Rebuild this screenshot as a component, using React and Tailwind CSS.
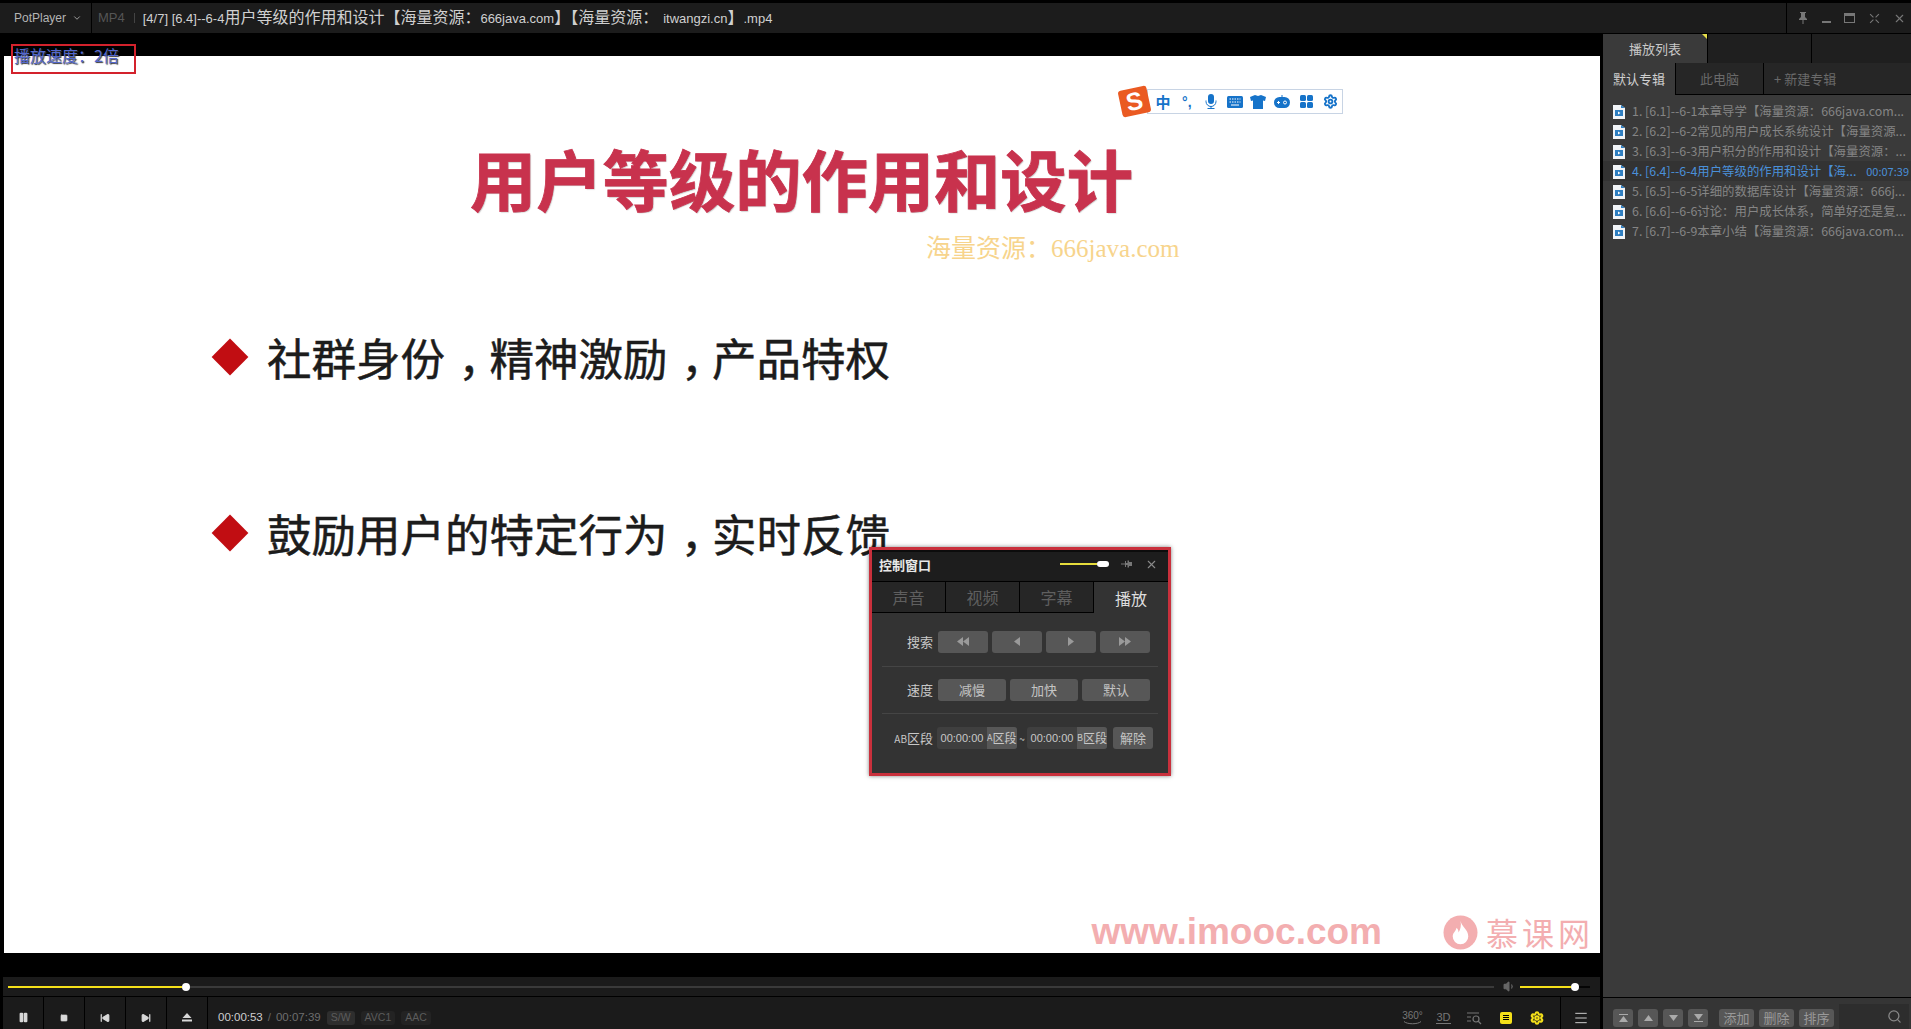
import React from 'react';
import { Search, X, ChevronDown, Pause, Square, SkipBack, SkipForward, Settings, Menu, Volume1 } from 'lucide-react';

const cjk = { fontFamily: '"Noto Sans CJK SC", sans-serif' };

const playlist = [
  { text: '1. [6.1]--6-1本章导学【海量资源：666java.com...' },
  { text: '2. [6.2]--6-2常见的用户成长系统设计【海量资源...' },
  { text: '3. [6.3]--6-3用户积分的作用和设计【海量资源：...' },
  { text: '4. [6.4]--6-4用户等级的作用和设计【海...', time: '00:07:39', active: true },
  { text: '5. [6.5]--6-5详细的数据库设计【海量资源：666j...' },
  { text: '6. [6.6]--6-6讨论：用户成长体系，简单好还是复...' },
  { text: '7. [6.7]--6-9本章小结【海量资源：666java.com...' },
];

const FileIcon = () => (
  <svg width="12" height="15" viewBox="0 0 12 15" className="shrink-0">
    <path d="M0 1h8l4 3v11H0z" fill="#f2f5f8" />
    <path d="M8 1l4 3H8z" fill="#2f7fc1" />
    <rect x="2" y="6" width="8" height="6" fill="#2f7fc1" />
    <path d="M5 7.5l2.5 1.5L5 10.5z" fill="#fff" />
  </svg>
);

const Tri = ({ dir = 'right', double }) => {
  const d = dir === 'right' ? 'M0 0l6 4.5L0 9z' : 'M6 0L0 4.5 6 9z';
  return (
    <svg width={double ? 12 : 6} height="9" viewBox={double ? '0 0 12 9' : '0 0 6 9'} fill="#9a9a9a">
      <path d={d} />
      {double && <path d={d} transform="translate(6 0)" />}
    </svg>
  );
};

const PanelBtn = ({ children, className = '' }) => (
  <div className={`h-[22px] rounded-[3px] bg-[#575757] flex items-center justify-center text-[13px] text-[#c4c4c4] ${className}`}>
    {children}
  </div>
);

const ControlWindow = () => (
  <div className="absolute left-[869px] top-[547px] w-[302px] h-[229px] border-[3px] border-[#c9303c] bg-[#333333] shadow-[0_0_4px_rgba(0,0,0,0.5)] flex flex-col" style={cjk}>
    <div className="h-[31px] pb-[5px] bg-[#1d1d1d] border-t-2 border-[#0c0c0c] flex items-center pl-[7px] pr-[10px]">
      <span className="text-[13px] font-bold text-[#e8e8e8] leading-none">控制窗口</span>
      <div className="ml-auto flex items-center">
        <div className="w-[37px] h-[2px] bg-[#e6dc3c]" />
        <div className="w-[12px] h-[6px] rounded-full bg-white" />
      </div>
      <svg width="12" height="10" viewBox="0 0 12 10" fill="#777" className="ml-[12px]">
        <path d="M0 4.5h4v1H0zM4 2h1v2h1.5V1.5H8V3h3v4H8v1.5H6.500V6H5v2H4z" />
      </svg>
      <X size={13} className="ml-[12px] text-[#8a8a8a]" />
    </div>
    <div className="h-[32px] flex text-[16px] text-[#5f5f5f] border-t border-black">
      <div className="w-[74px] flex items-center justify-center bg-[#262626] border-b border-r border-black">声音</div>
      <div className="w-[74px] flex items-center justify-center bg-[#262626] border-b border-r border-black">视频</div>
      <div className="w-[74px] flex items-center justify-center bg-[#262626] border-b border-r border-black">字幕</div>
      <div className="flex-1 flex items-center justify-center text-[#dddddd]">播放</div>
    </div>
    <div className="flex-1 px-[10px] text-[13px] text-[#c8c8c8]">
      <div className="h-[54px] pt-[4px] flex items-center border-b border-[#454545]">
        <span className="w-[51px] text-right whitespace-nowrap">搜索</span>
        <div className="ml-[5px] flex gap-[4px]">
          <PanelBtn className="w-[50px]"><Tri dir="left" double /></PanelBtn>
          <PanelBtn className="w-[50px]"><Tri dir="left" /></PanelBtn>
          <PanelBtn className="w-[50px]"><Tri /></PanelBtn>
          <PanelBtn className="w-[50px]"><Tri double /></PanelBtn>
        </div>
      </div>
      <div className="h-[47px] flex items-center border-b border-[#454545]">
        <span className="w-[51px] text-right">速度</span>
        <div className="ml-[5px] flex gap-[4px]">
          <PanelBtn className="w-[68px]">减慢</PanelBtn>
          <PanelBtn className="w-[68px]">加快</PanelBtn>
          <PanelBtn className="w-[68px]">默认</PanelBtn>
        </div>
      </div>
      <div className="h-[48px] flex items-center whitespace-nowrap">
        <span className="w-[51px] text-right text-[13px]"><span className="text-[10px]">AB</span>区段</span>
        <div className="ml-[4px] w-[80px] h-[22px] rounded-[3px] bg-[#3f3f3f] flex items-center overflow-hidden">
          <span className="w-[50px] text-center text-[11px]" style={{ fontFamily: '"Liberation Sans", sans-serif' }}>00:00:00</span>
          <span className="flex-1 h-full bg-[#575757] flex items-center text-[12px]"><span className="text-[9px]">A</span>区段</span>
        </div>
        <span className="w-[10px] text-[10px] text-center">~</span>
        <div className="w-[80px] h-[22px] rounded-[3px] bg-[#3f3f3f] flex items-center overflow-hidden">
          <span className="w-[50px] text-center text-[11px]" style={{ fontFamily: '"Liberation Sans", sans-serif' }}>00:00:00</span>
          <span className="flex-1 h-full bg-[#575757] flex items-center text-[12px]"><span className="text-[9px]">B</span>区段</span>
        </div>
        <PanelBtn className="ml-[6px] w-[40px]">解除</PanelBtn>
      </div>
    </div>
  </div>
);

const ImeCell = ({ children }) => (
  <div className="w-[24px] h-full flex items-center justify-center">{children}</div>
);

const SogouBar = () => (
  <div className="absolute left-[1120px] top-[88px] flex items-center">
    <div className="w-[29px] h-[27px] rounded-[3px] bg-[#ea5a22] -rotate-12 flex items-center justify-center text-white font-black text-[25px] leading-none z-10" style={{ fontFamily: '"Liberation Sans", sans-serif' }}>S</div>
    <div className="-ml-[2px] h-[25px] w-[196px] bg-white border border-[#c8d4e4] flex items-center pl-[3px] text-[#1673c9]">
      <ImeCell><span className="text-[15px] font-bold leading-none" style={cjk}>中</span></ImeCell>
      <ImeCell><span className="text-[14px] font-bold leading-none" style={{ fontFamily: '"Liberation Sans", sans-serif' }}>°,</span></ImeCell>
      <ImeCell>
        <svg width="12" height="15" viewBox="0 0 12 15" fill="currentColor">
          <rect x="3" y="0" width="6" height="10" rx="3" />
          <path d="M1 6.5v1a5 5 0 0010 0v-1" fill="none" stroke="currentColor" />
          <path d="M5.5 12h1v2h3v1h-7v-1h3z" />
        </svg>
      </ImeCell>
      <ImeCell>
        <svg width="16" height="12" viewBox="0 0 16 12">
          <rect width="16" height="12" rx="1.5" fill="currentColor" />
          <path d="M2.500 3h11M2.500 6h11" stroke="#fff" strokeDasharray="1.5 1" />
          <path d="M4 9h8" stroke="#fff" />
        </svg>
      </ImeCell>
      <ImeCell>
        <svg width="16" height="14" viewBox="0 0 16 14" fill="currentColor"><path d="M5 0l3 1 3-1 5 2-1 4-2-.5V14H3V5.500L1 6 0 2z" /></svg>
      </ImeCell>
      <ImeCell>
        <svg width="16" height="13" viewBox="0 0 16 13">
          <rect y="2" width="16" height="11" rx="5.5" fill="currentColor" />
          <path d="M8 0v3" stroke="currentColor" />
          <path d="M3 7.500h3M4.500 6v3" stroke="#fff" />
          <circle cx="11" cy="7.5" r="1.5" fill="none" stroke="#fff" />
        </svg>
      </ImeCell>
      <ImeCell>
        <svg width="13" height="13" viewBox="0 0 13 13" fill="currentColor">
          <rect width="6" height="6" rx="1.5" /><rect x="7" width="6" height="6" rx="1.5" />
          <rect y="7" width="6" height="6" rx="1.5" /><rect x="7" y="7" width="6" height="6" rx="1.5" />
        </svg>
      </ImeCell>
      <ImeCell><Settings size={15} strokeWidth={3} /></ImeCell>
    </div>
  </div>
);

const MoocLogo = () => (
  <div className="absolute right-[6px] bottom-[1px] h-[40px] flex items-center text-[#f3aeb0] whitespace-nowrap">
    <span className="text-[37px] font-bold leading-[40px]" style={{ fontFamily: '"Liberation Sans", sans-serif' }}>www.imooc.com</span>
    <svg width="35" height="35" viewBox="0 0 36 36" className="ml-[61px]">
      <circle cx="18" cy="18" r="17.5" fill="#f3aeb0" />
      <path d="M18 6c1 6 8 9 8 16a8 8 0 01-16 0c0-4 3-5 4-9 2 2 2 4 2 5 2-3 3-7 2-12z" fill="#fff" />
    </svg>
    <span className="ml-[8px] text-[32px] tracking-[4px] leading-[40px]" style={cjk}>慕课网</span>
  </div>
);

// the slide sets its full-width comma in the middle of the cell
const Comma = () => <span className="pl-[0.3em] tracking-[-0.3em]">，</span>;

const Bullet = ({ className, parts }) => (
  <div className={`pl-[207px] flex items-center gap-[19px] ${className}`}>
    <div className="w-[37px] h-[37px] flex items-center justify-center"><div className="w-[26px] h-[26px] rotate-45 bg-[#c10d12]" /></div>
    <span className="text-[44.5px] leading-[62px] text-[#1c1c1c] whitespace-nowrap [-webkit-text-stroke:0.5px_#1c1c1c]">
      {parts[0]}<Comma />{parts[1]}{parts[2] && <Comma />}{parts[2]}
    </span>
  </div>
);

const Slide = () => (
  <div className="relative ml-[4px] mr-[3px] mt-[23px] h-[897px] bg-white" style={cjk}>
    <div className="pt-[71px] pl-[466px]">
      <h1 className="text-[66.3px] leading-[100px] font-bold text-[#c8324d] whitespace-nowrap [-webkit-text-stroke:0.8px_#c8324d] [text-shadow:1px_1px_1px_rgba(120,120,120,0.4)]">用户等级的作用和设计</h1>
    </div>
    <div className="pl-[922px] mt-[7px] text-[25px] leading-[30px] text-[#f7d48c] whitespace-nowrap" style={{ fontFamily: '"Liberation Serif", "Noto Sans CJK SC", serif' }}>海量资源：666java.com</div>
    <Bullet className="mt-[62px]" parts={['社群身份', '精神激励', '产品特权']} />
    <Bullet className="mt-[114px]" parts={['鼓励用户的特定行为', '实时反馈']} />
    <MoocLogo />
  </div>
);

const CtrlCell = ({ children }) => (
  <div className="w-[41px] h-full pt-[9px] border-r border-black flex items-center justify-center text-[#d8d8d8]">{children}</div>
);

const Badge = ({ children, dark }) => (
  <span className={`px-[4px] h-[14px] flex items-center rounded-[3px] text-[10.5px] text-[#5c5c5c] ${dark ? 'bg-[#2e2e2e]' : 'bg-[#232323]'}`}>{children}</span>
);

const ToolCell = ({ children }) => (
  <div className="w-[31px] h-full pt-[9px] flex items-center justify-center">{children}</div>
);

const Controls = () => (
  <div className="h-[52px] ml-[3px] mr-[3px] bg-[#1b1b1b] flex flex-col" style={{ fontFamily: '"Liberation Sans", sans-serif' }}>
    <div className="h-[20px] flex items-center pl-[5px] pr-[10px] border-b border-black">
      <div className="w-[174px] h-[2px] bg-[#f5e01a]" />
      <div className="w-[8px] h-[8px] rounded-full bg-white shrink-0" />
      <div className="flex-1 h-[2px] bg-[#3a3a3a]" />
      <Volume1 size={13} fill="#666" className="ml-[9px] text-[#666]" />
      <div className="ml-[4px] w-[51px] h-[2px] bg-[#f5e01a]" />
      <div className="w-[8px] h-[8px] rounded-full bg-white shrink-0" />
      <div className="w-[11px] h-[2px] bg-[#050505]" />
    </div>
    <div className="flex-1 flex items-center">
      <CtrlCell><Pause size={11} fill="currentColor" strokeWidth={3} /></CtrlCell>
      <CtrlCell><Square size={8} fill="currentColor" /></CtrlCell>
      <CtrlCell><SkipBack size={10} fill="currentColor" strokeWidth={3} /></CtrlCell>
      <CtrlCell><SkipForward size={10} fill="currentColor" strokeWidth={3} /></CtrlCell>
      <CtrlCell>
        <svg width="10" height="9" viewBox="0 0 10 9" fill="currentColor"><path d="M5 0l4.500 5H.5z" /><rect y="6.5" width="10" height="2" /></svg>
      </CtrlCell>
      <div className="ml-[10px] pt-[10px] flex items-center text-[11.5px] whitespace-nowrap">
        <span className="text-[#cfcfcf]">00:00:53</span>
        <span className="ml-[5px] text-[#666]">/</span>
        <span className="ml-[5px] text-[#6e6e6e]">00:07:39</span>
        <div className="ml-[6px] flex gap-[6px]">
          <Badge dark>S/W</Badge>
          <Badge>AVC1</Badge>
          <Badge>AAC</Badge>
        </div>
      </div>
      <div className="ml-auto flex items-center h-full text-[#777]">
        <ToolCell>
          <div className="flex flex-col items-center">
            <span className="text-[10px] leading-[10px]">360°</span>
            <svg width="19" height="4" viewBox="0 0 19 4" fill="none" stroke="currentColor"><path d="M1 .5c3 3 14 3 17 0" /></svg>
          </div>
        </ToolCell>
        <ToolCell><span className="text-[11px] leading-[12px] border-b border-[#777]">3D</span></ToolCell>
        <ToolCell>
          <svg width="16" height="14" viewBox="0 0 16 14" fill="none" stroke="currentColor" strokeWidth="1.2">
            <path d="M0 2h12M0 6h4M0 10h4" /><circle cx="9" cy="8" r="3" /><path d="M11 10l3 3" />
          </svg>
        </ToolCell>
        <ToolCell>
          <div className="w-[12px] h-[12px] rounded-[2px] bg-[#f5e01a] flex flex-col items-center justify-center gap-[1px]">
            <div className="w-[6px] h-[1px] bg-black" />
            <div className="w-[6px] h-[1px] bg-black" />
            <div className="w-[6px] h-[1px] bg-black" />
          </div>
        </ToolCell>
        <ToolCell><Settings size={14} strokeWidth={3.5} className="text-[#f5e01a]" /></ToolCell>
        <div className="ml-[8px] w-[40px] h-full pt-[9px] border-l border-black flex items-center justify-center text-[#d8d8d8]"><Menu size={16} strokeWidth={1.4} /></div>
      </div>
    </div>
  </div>
);

const Playlist = () => (
  <div className="w-[308px] bg-[#3a3a3a] flex flex-col" style={cjk}>
    <div className="h-[30px] flex bg-[#1f1f1f] border-t border-black">
      <div className="relative w-[104px] flex items-center pl-[26px] bg-[#3a3a3a] text-[13px] text-[#c8c8c8] whitespace-nowrap">
        播放列表
        <div className="absolute right-0 top-0 w-0 h-0 border-t-[5px] border-l-[5px] border-t-[#e8e04a] border-l-transparent" />
      </div>
      <div className="w-[105px] border-l border-r border-black" />
    </div>
    <div className="h-[32px] flex text-[13px] text-[#6a6a6a] whitespace-nowrap">
      <div className="w-[72px] pl-[10px] flex items-center bg-[#3a3a3a] text-[#cfcfcf]">默认专辑</div>
      <div className="w-[88px] flex items-center justify-center bg-[#262626] border-l border-b border-black">此电脑</div>
      <div className="flex-1 pl-[10px] flex items-center bg-[#262626] border-l border-b border-black">+ 新建专辑</div>
    </div>
    <div className="pt-[6px] flex flex-col">
      {playlist.map((item) => (
        <div key={item.text} className={`h-[20px] flex items-center gap-[7px] pl-[10px] pr-[2px] text-[12.4px] whitespace-nowrap overflow-hidden ${item.active ? 'bg-[#333333] text-[#4a90d9]' : 'text-[#858585]'}`}>
          <FileIcon />
          <span>{item.text}</span>
          {item.time && <span className="ml-auto text-[11px]">{item.time}</span>}
        </div>
      ))}
    </div>
    <div className="mt-auto h-[32px] border-t border-black bg-[#353535] flex items-start pl-[10px] pt-[11px] text-[13px] text-[#9a9a9a]">
      <div className="flex gap-[5px]">
        <PanelBtn className="w-[20px] !h-[18px]">
          <svg width="9" height="8" viewBox="0 0 9 8" fill="#aaa"><rect width="9" height="1" /><path d="M4.500 2L9 8H0z" /></svg>
        </PanelBtn>
        <PanelBtn className="w-[20px] !h-[18px]">
          <svg width="9" height="6" viewBox="0 0 9 6" fill="#aaa"><path d="M4.500 0L9 6H0z" /></svg>
        </PanelBtn>
        <PanelBtn className="w-[20px] !h-[18px]">
          <svg width="9" height="6" viewBox="0 0 9 6" fill="#aaa"><path d="M0 0h9L4.500 6z" /></svg>
        </PanelBtn>
        <PanelBtn className="w-[20px] !h-[18px]">
          <svg width="9" height="8" viewBox="0 0 9 8" fill="#aaa"><path d="M0 0h9L4.500 6z" /><rect y="7" width="9" height="1" /></svg>
        </PanelBtn>
      </div>
      <div className="ml-[11px] flex gap-[5px]">
        <PanelBtn className="w-[35px] !h-[18px] !text-[#999]">添加</PanelBtn>
        <PanelBtn className="w-[35px] !h-[18px] !text-[#999]">删除</PanelBtn>
        <PanelBtn className="w-[35px] !h-[18px] !text-[#999]">排序</PanelBtn>
      </div>
      <div className="ml-[5px] -mt-[5px] w-[70px] h-[25px] bg-[#2d2d2d] flex items-center justify-end pr-[7px] text-[#888]">
        <Search size={15} />
      </div>
    </div>
  </div>
);

const Seg = ({ children }) => <span className="text-[16px] leading-none" style={cjk}>{children}</span>;

export default function App() {
  return (
    <div className="relative h-screen overflow-hidden bg-black flex flex-col">
      <div className="h-[33px] pt-[3px] bg-black shrink-0">
        <div className="h-full bg-[#1c1c1c] flex items-center text-[13px] whitespace-nowrap" style={{ fontFamily: '"Liberation Sans", "Noto Sans CJK SC", sans-serif' }}>
          <div className="w-[92px] h-full pl-[14px] flex items-center gap-[6px] border-r border-black text-[12px] text-[#b4b4b4]">
            PotPlayer <ChevronDown size={10} />
          </div>
          <span className="ml-[6px] text-[#555]">MP4</span>
          <span className="ml-[9px] mr-[8px] w-px h-[10px] bg-[#444]" />
          <span className="mt-[1px] text-[#d0d0d0]">
            [4/7] [6.4]--6-4<Seg>用户等级的作用和设计【海量资源：</Seg>666java.com<Seg>】【海量资源：</Seg><span className="ml-[5px]">itwangzi.cn</span><Seg>】</Seg>.mp4
          </span>
          <div className="ml-auto w-[125px] h-full border-l border-black flex items-center justify-between pl-[11px] pr-[5px] text-[#777]">
            <svg width="10" height="12" viewBox="0 0 10 12" fill="currentColor"><path d="M2 0h6v1H7v4l2 2v1H1V7l2-2V1H2zM4.500 8h1v4h-1z" /></svg>
            <div className="w-[9px] h-[2px] bg-current mt-[8px]" />
            <div className="w-[11px] h-[10px] border border-current border-t-[3px]" />
            <svg width="11" height="11" viewBox="0 0 10 10" fill="none" stroke="currentColor"><path d="M1 1l3 3M9 1L6 4M1 9l3-3M9 9L6 6" /></svg>
            <X size={13} />
          </div>
        </div>
      </div>

      <div className="flex-1 min-h-0 flex">
        <div className="w-[1603px] flex flex-col">
          <div className="flex-1 min-h-0 bg-black"><Slide /></div>
          <Controls />
        </div>
        <Playlist />
      </div>

      {/* OSD */}
      <div className="absolute left-[11px] top-[44px] w-[125px] h-[30px] border-2 border-[#d3222c] pl-[1px] text-[16px] leading-[18px] text-[#5468cc] whitespace-nowrap [text-shadow:1px_1px_1px_#333]" style={cjk}>播放速度：2倍</div>
      <SogouBar />
      <ControlWindow />
    </div>
  );
}
